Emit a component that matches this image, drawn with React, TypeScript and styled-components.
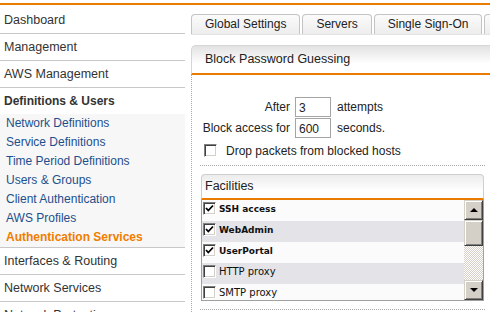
import React from 'react';
import styled, { createGlobalStyle } from 'styled-components';

const GlobalStyle = createGlobalStyle`
  html, body {
    margin: 0;
    padding: 0;
    background: #fff;
    overflow: hidden;
  }
  body {
    font-family: "Liberation Sans", Arial, sans-serif;
    font-size: 12px;
    color: #222;
  }
`;

const Page = styled.div`
  height: 307px;
  overflow: hidden;
  border-top: 2px solid #e87b00;
  margin-top: 3px;
  display: flex;
  gap: 6px;
`;

const Sidebar = styled.nav`
  width: 185px;
  flex-shrink: 0;
  padding-top: 2px;
`;

const NavItem = styled.div`
  height: 26px;
  line-height: 26px;
  padding-left: 4px;
  border-bottom: 1px solid #c8c8c8;
  font-size: 12.5px;
  color: #333;
`;

const NavGroup = styled.div`
  border-bottom: 1px solid #c8c8c8;
`;

const NavGroupTitle = styled.div`
  height: 26px;
  line-height: 26px;
  padding-left: 4px;
  font-weight: bold;
  color: #333;
`;

const SubList = styled.div`
  background: #f7f7f7;
`;

const SubItem = styled.div<{ $active?: boolean }>`
  height: 19px;
  line-height: 19px;
  padding-left: 6px;
  color: ${(p) => (p.$active ? '#ef7d00' : '#1c4f8c')};
  font-weight: ${(p) => (p.$active ? 'bold' : 'normal')};
`;

const Main = styled.main`
  flex: 1;
  min-width: 0;
  padding-top: 9px;
`;

const TabBar = styled.div`
  display: flex;
  gap: 2px;
  white-space: nowrap;
  overflow: hidden;
  border-bottom: 1px solid #e4e4e4;
`;

const Tab = styled.div`
  height: 19px;
  line-height: 19px;
  padding: 0 13px;
  border: 1px solid #c4c4c4;
  border-bottom: none;
  border-radius: 4px 4px 0 0;
  background: linear-gradient(#fbfbfb, #ededed);
  color: #222;
  flex-shrink: 0;
`;

const Panel = styled.section`
  margin-top: 10px;
`;

const PanelHeader = styled.div`
  height: 27px;
  line-height: 27px;
  padding-left: 13px;
  border-top: 1px solid #d6d6d6;
  border-left: 1px solid #d6d6d6;
  border-top-left-radius: 5px;
  border-bottom: 2px solid #e87b00;
  background: linear-gradient(#e2e2e2, #fff 65%);
  font-size: 12.5px;
  color: #222;
`;

const PanelBody = styled.div`
  border-left: 1px dotted #a8a8a8;
  padding: 22px 5px 10px 8px;
`;

const FormGrid = styled.div`
  display: grid;
  grid-template-columns: 90px 36px auto;
  column-gap: 5px;
  row-gap: 1px;
  align-items: center;
`;

const Label = styled.label`
  text-align: right;
  color: #222;
  white-space: nowrap;
`;

const Unit = styled.span`
  padding-left: 1px;
  color: #222;
`;

const TextInput = styled.input`
  box-sizing: border-box;
  width: 36px;
  height: 20px;
  border: 1px solid #a4a4a4;
  padding: 1px 3px 0;
  font: inherit;
  color: #222;
  outline: none;
`;

const CheckRow = styled.label`
  display: flex;
  align-items: center;
  gap: 9px;
  margin: 6px 0 0 4px;
  height: 13px;
  color: #222;
`;

const Divider = styled.div`
  border-top: 1px dotted #a8a8a8;
  margin-top: 8px;
`;

const Box = styled.div`
  margin: 8px 1px 0 1px;
`;

const BoxHeader = styled.div`
  box-sizing: border-box;
  height: 26px;
  line-height: 23px;
  padding-left: 3px;
  border: 1px solid #cfcfcf;
  border-bottom: 2px solid #e87b00;
  border-radius: 4px 4px 0 0;
  background: linear-gradient(#ececec, #fff 70%);
  font-size: 12.5px;
  color: #222;
`;

const ListFrame = styled.div`
  display: flex;
  height: 100px;
  border: 1px solid #a0a0a0;
  border-top: none;
`;

const Rows = styled.div`
  flex: 1;
  overflow: hidden;
`;

const Row = styled.div<{ $alt: boolean }>`
  height: 21px;
  display: flex;
  align-items: flex-start;
  gap: 3px;
  padding: 2px 0 0 1px;
  box-sizing: border-box;
  background: ${(p) => (p.$alt ? '#e4e4e8' : '#fbfbfb')};
`;

const Box3D = styled.span`
  box-sizing: border-box;
  width: 13px;
  height: 13px;
  flex-shrink: 0;
  display: inline-flex;
  align-items: center;
  justify-content: center;
  background: #fff;
  border: 1px solid;
  border-color: #808080 #fff #fff #808080;
  box-shadow: inset 1px 1px #404040, inset -1px -1px #d4d0c8;
`;

const RowText = styled.span<{ $on: boolean }>`
  font-family: "DejaVu Sans", Verdana, sans-serif;
  font-size: ${(p) => (p.$on ? '9px' : '10px')};
  font-weight: ${(p) => (p.$on ? 'bold' : 'normal')};
  color: #111;
  line-height: 14px;
`;

const ScrollBar = styled.div`
  width: 19px;
  display: flex;
  flex-direction: column;
`;

const ScrollButton = styled.div`
  box-sizing: border-box;
  height: 20px;
  background: #d4d0c8;
  border: 1px solid;
  border-color: #d4d0c8 #404040 #404040 #d4d0c8;
  box-shadow: inset 1px 1px #fff, inset -1px -1px #808080;
  display: flex;
  align-items: center;
  justify-content: center;
`;

const Thumb = styled(ScrollButton)`
  height: 26px;
`;

const Track = styled.div`
  flex: 1;
  background: repeating-conic-gradient(#d4d0c8 0 25%, #fff 0 50%) 0 0 / 2px 2px;
`;

const Arrow = styled.span<{ $up?: boolean }>`
  width: 0;
  height: 0;
  border-left: 4px solid transparent;
  border-right: 4px solid transparent;
  ${(p) => (p.$up ? 'border-bottom: 4px solid #000;' : 'border-top: 4px solid #000;')}
`;

const CheckMark = () => (
  <svg width="9" height="9" viewBox="0 0 9 9">
    <path d="M1 4 L3.3 6.5 L8 1.5" fill="none" stroke="#000" strokeWidth="1.8" />
  </svg>
);

const facilities = [
  { name: 'SSH access', on: true },
  { name: 'WebAdmin', on: true },
  { name: 'UserPortal', on: true },
  { name: 'HTTP proxy', on: false },
  { name: 'SMTP proxy', on: false },
];

const subItems = [
  'Network Definitions',
  'Service Definitions',
  'Time Period Definitions',
  'Users & Groups',
  'Client Authentication',
  'AWS Profiles',
];

const App: React.FC = () => (
  <>
    <GlobalStyle />
    <Page>
      <Sidebar>
        <NavItem>Dashboard</NavItem>
        <NavItem>Management</NavItem>
        <NavItem>AWS Management</NavItem>
        <NavGroup>
          <NavGroupTitle>Definitions &amp; Users</NavGroupTitle>
          <SubList>
            {subItems.map((s) => (
              <SubItem key={s}>{s}</SubItem>
            ))}
            <SubItem $active>Authentication Services</SubItem>
          </SubList>
        </NavGroup>
        <NavItem>Interfaces &amp; Routing</NavItem>
        <NavItem>Network Services</NavItem>
        <NavItem>Network Protection</NavItem>
      </Sidebar>

      <Main>
        <TabBar>
          <Tab>Global Settings</Tab>
          <Tab>Servers</Tab>
          <Tab>Single Sign-On</Tab>
          <Tab>Advanced</Tab>
        </TabBar>

        <Panel>
          <PanelHeader>Block Password Guessing</PanelHeader>
          <PanelBody>
            <FormGrid>
              <Label>After</Label>
              <TextInput defaultValue="3" />
              <Unit>attempts</Unit>
              <Label>Block access for</Label>
              <TextInput defaultValue="600" />
              <Unit>seconds.</Unit>
            </FormGrid>
            <CheckRow>
              <Box3D />
              Drop packets from blocked hosts
            </CheckRow>
            <Divider />
            <Box>
              <BoxHeader>Facilities</BoxHeader>
              <ListFrame>
                <Rows>
                  {facilities.map((f, i) => (
                    <Row key={f.name} $alt={i % 2 === 1}>
                      <Box3D>{f.on && <CheckMark />}</Box3D>
                      <RowText $on={f.on}>{f.name}</RowText>
                    </Row>
                  ))}
                </Rows>
                <ScrollBar>
                  <ScrollButton>
                    <Arrow $up />
                  </ScrollButton>
                  <Thumb />
                  <Track />
                  <ScrollButton>
                    <Arrow />
                  </ScrollButton>
                </ScrollBar>
              </ListFrame>
            </Box>
            <Divider />
          </PanelBody>
        </Panel>
      </Main>
    </Page>
  </>
);

export default App;
